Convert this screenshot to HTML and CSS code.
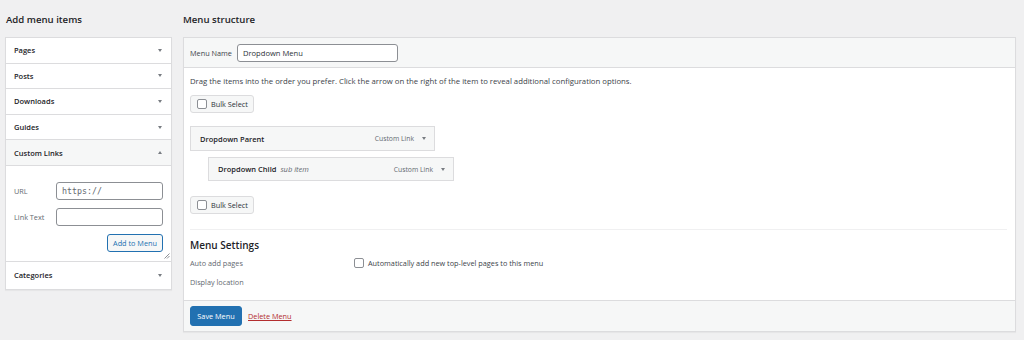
FILE: index.html
```html
<!DOCTYPE html>
<html>
<head>
<meta charset="utf-8">
<link rel="stylesheet" href="styles.css">
</head>
<body>
<div class="page">
  <div class="col-left">
    <h2 class="col-title">Add menu items</h2>
    <div class="accordion">
      <div class="acc-row"><span class="acc-title">Pages</span><span class="tri down"></span></div>
      <div class="acc-row"><span class="acc-title">Posts</span><span class="tri down"></span></div>
      <div class="acc-row"><span class="acc-title">Downloads</span><span class="tri down"></span></div>
      <div class="acc-row"><span class="acc-title">Guides</span><span class="tri down"></span></div>
      <div class="acc-row open"><span class="acc-title">Custom Links</span><span class="tri up"></span></div>
      <div class="acc-body">
        <div class="field"><span class="field-label">URL</span><span class="input mono">https://</span></div>
        <div class="field"><span class="field-label">Link Text</span><span class="input"></span></div>
        <div class="field-actions"><span class="btn-secondary">Add to Menu</span></div>
        <svg class="grip" width="6" height="6" viewBox="0 0 6 6"><path d="M0.5 5.5 L5.5 0.5 M3 5.5 L5.5 3" stroke="#8c8f94" stroke-width="1"/></svg>
      </div>
      <div class="acc-row last"><span class="acc-title">Categories</span><span class="tri down"></span></div>
    </div>
  </div>
  <div class="col-right">
    <h2 class="col-title">Menu structure</h2>
    <div class="panel">
      <div class="panel-head">
        <span class="name-label">Menu Name</span>
        <span class="input name-input">Dropdown Menu</span>
      </div>
      <div class="panel-body">
        <p class="desc">Drag the items into the order you prefer. Click the arrow on the right of the item to reveal additional configuration options.</p>
        <div class="bulk"><span class="check"></span>Bulk Select</div>
        <div class="items">
          <div class="item"><span class="item-title">Dropdown Parent</span><span class="item-type">Custom Link</span><span class="tri down"></span></div>
          <div class="item sub"><span class="item-title">Dropdown Child <em class="subtag">sub item</em></span><span class="item-type">Custom Link</span><span class="tri down"></span></div>
        </div>
        <div class="bulk"><span class="check"></span>Bulk Select</div>
        <div class="settings">
          <h3 class="settings-title">Menu Settings</h3>
          <div class="set-row"><span class="set-label">Auto add pages</span><span class="set-val"><span class="check"></span>Automatically add new top-level pages to this menu</span></div>
          <div class="set-row"><span class="set-label">Display location</span></div>
        </div>
      </div>
      <div class="panel-foot">
        <span class="btn-primary">Save Menu</span>
        <span class="del">Delete Menu</span>
      </div>
    </div>
  </div>
</div>
</body>
</html>
```

FILE: styles.css
```css
* { box-sizing: border-box; }
html, body { margin: 0; padding: 0; }
body {
  background: #f0f0f1;
  font-family: "Open Sans", "Noto Sans", sans-serif;
  font-size: 7.3px;
  color: #3c434a;
  width: 1024px;
  height: 340px;
  overflow: hidden;
}
.page {
  display: flex;
  gap: 11px;
  padding: 0 8px 0 5px;
}
.col-left { width: 167px; flex: none; }
.col-right { flex: 1; }
.col-title {
  margin: 0;
  height: 37px;
  padding-top: 13px;
  font-size: 9.6px;
  font-weight: 600;
  color: #1d2327;
  line-height: 14px;
}
.col-left .col-title { padding-left: 1px; }

.accordion {
  background: #fff;
  border: 1px solid #dcdcde;
  box-shadow: 0 1px 1px rgba(0,0,0,0.04);
}
.acc-row {
  display: flex;
  align-items: center;
  justify-content: space-between;
  height: 25.6px;
  padding: 0 9px 0 8px;
  border-bottom: 1px solid #dcdcde;
}
.acc-row.open { background: #f6f7f7; }
.acc-row.last { border-bottom: none; height: 27px; }
.acc-title { font-weight: 600; color: #1d2327; font-size: 7.5px; }

.tri { width: 0; height: 0; border-left: 2.5px solid transparent; border-right: 2.5px solid transparent; flex: none; }
.tri.down { border-top: 3.5px solid #787c82; }
.tri.up { border-bottom: 3.5px solid #787c82; }

.acc-body {
  position: relative;
  padding: 16px 8px 9px 8px;
  border-bottom: 1px solid #dcdcde;
  height: 96px;
}
.field {
  display: flex;
  align-items: center;
  justify-content: space-between;
  margin-bottom: 8px;
}
.field-label { color: #646970; }
.input {
  display: flex;
  align-items: center;
  height: 18px;
  width: 107px;
  border: 1px solid #8c8f94;
  border-radius: 3px;
  background: #fff;
  padding: 0 5px;
  color: #2c3338;
}
.input.mono { font-family: "DejaVu Sans Mono", "Liberation Mono", monospace; color: #646970; font-size: 8.3px; }
.field-actions { display: flex; justify-content: flex-end; }
.btn-secondary {
  display: inline-flex;
  align-items: center;
  justify-content: center;
  height: 18px;
  width: 56px;
  border: 1px solid #2271b1;
  border-radius: 3px;
  background: #f6f7f7;
  color: #2271b1;
  white-space: nowrap;
}
.grip { position: absolute; right: 1px; bottom: 2px; }

.panel {
  background: #fff;
  border: 1px solid #dcdcde;
  box-shadow: 0 1px 1px rgba(0,0,0,0.04);
}
.panel-head {
  display: flex;
  align-items: center;
  gap: 5px;
  height: 30px;
  padding: 0 6px;
  background: #f6f7f7;
  border-bottom: 1px solid #dcdcde;
}
.name-label { color: #3c434a; }
.name-input { width: 161px; color: #2c3338; font-size: 7.6px; }

.panel-body { padding: 0 8px 0 6px; }
.desc { margin: 0; padding-top: 8px; height: 27px; line-height: 11px; color: #3c434a; font-size: 7.75px; white-space: nowrap; }
.bulk {
  display: flex;
  align-items: center;
  gap: 4px;
  width: 64px;
  height: 18px;
  padding: 0 6px;
  background: #f6f7f7;
  border: 1px solid #dcdcde;
  border-radius: 3px;
  color: #2c3338;
  white-space: nowrap;
}
.check {
  display: inline-block;
  width: 10px;
  height: 10px;
  border: 1px solid #8c8f94;
  border-radius: 2px;
  background: #fff;
  flex: none;
}
.items { padding: 13px 0 15px 0; display: flex; flex-direction: column; gap: 6px; }
.item {
  display: flex;
  align-items: center;
  width: 245px;
  height: 25px;
  padding: 0 8px 0 9px;
  background: #f6f7f7;
  border: 1px solid #dcdcde;
}
.item.sub { margin-left: 18px; width: 246px; height: 24px; }
.item-title { flex: 1; font-weight: 600; color: #1d2327; font-size: 7.5px; white-space: nowrap; }
.subtag { font-weight: 400; font-style: italic; color: #646970; margin-left: 2px; }
.item-type { color: #646970; margin-right: 8px; font-size: 6.8px; }

.settings { margin-top: 15px; border-top: 1px solid #f0f0f1; padding-top: 8px; height: 71px; }
.settings-title { margin: 0; font-size: 10px; font-weight: 600; color: #1d2327; line-height: 15px; }
.set-row { display: flex; align-items: center; height: 19px; }
.set-label { width: 164px; color: #646970; }
.set-val { display: flex; align-items: center; gap: 4px; color: #3c434a; }

.panel-foot {
  display: flex;
  align-items: center;
  gap: 6px;
  height: 31px;
  padding: 0 6px;
  background: #f6f7f7;
  border-top: 1px solid #dcdcde;
}
.btn-primary {
  display: inline-flex;
  align-items: center;
  justify-content: center;
  width: 52px;
  height: 20px;
  background: #2271b1;
  border: 1px solid #2271b1;
  border-radius: 3px;
  color: #fff;
  white-space: nowrap;
}
.del { color: #b32d2e; text-decoration: underline; }
```
